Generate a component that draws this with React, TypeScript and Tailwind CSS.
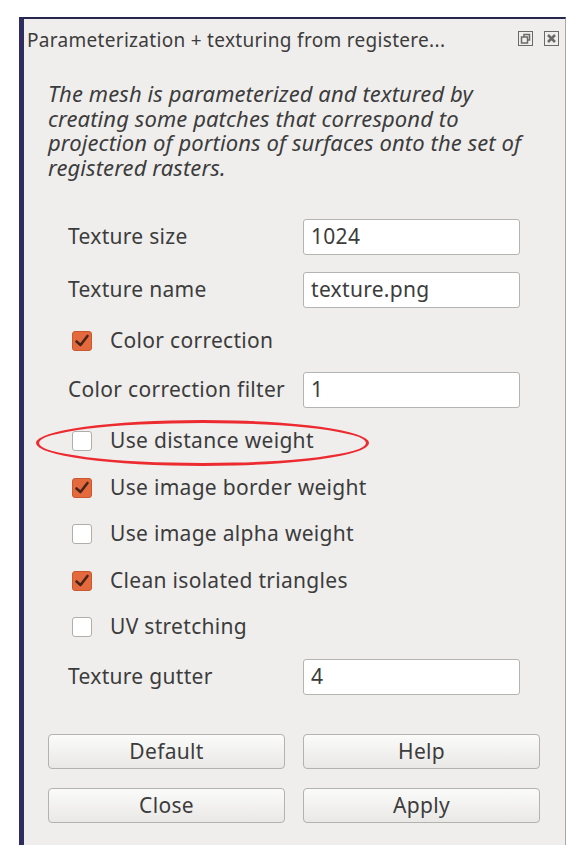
import React from "react";

const font = { fontFamily: '"Noto Sans", "Open Sans", sans-serif' };

function Check({ checked }: { checked: boolean }) {
  if (checked) {
    return (
      <div className="w-[20px] h-[20px] rounded-[3px] bg-[#e4693d] border border-[#c9582f] flex items-center justify-center shrink-0">
        <svg width="16" height="14" viewBox="0 0 16 14">
          <path d="M2.5 7.5 L6.5 11 L13.5 2" stroke="#4a2418" strokeWidth="2.6" fill="none" strokeLinecap="round" strokeLinejoin="round" />
        </svg>
      </div>
    );
  }
  return <div className="w-[20px] h-[20px] rounded-[3px] bg-white border border-[#b0aeab] shrink-0" />;
}

function FieldRow({ label, value, mt }: { label: string; value: string; mt: string }) {
  return (
    <div className={`flex items-center h-[36px] ${mt}`}>
      <div className="w-[279px] pl-[44px] text-[21px] tracking-[0.3px] text-[#3c3c3c] whitespace-nowrap">{label}</div>
      <div className="w-[217px] h-[36px] bg-white border border-[#b6b4b0] rounded-[3px] flex items-center pl-[7px] text-[21px] tracking-[0.3px] text-[#3c3c3c]">
        {value}
      </div>
    </div>
  );
}

function CheckRow({ label, checked, mt, circled }: { label: string; checked: boolean; mt: string; circled?: boolean }) {
  return (
    <div className={`relative flex items-center h-[36px] pl-[48px] ${mt}`}>
      <Check checked={checked} />
      <div className="ml-[18px] text-[21px] tracking-[0.3px] text-[#3c3c3c] whitespace-nowrap">{label}</div>
      {circled && (
        <div className="absolute left-[12px] top-[-3px] w-[333px] h-[46px] rounded-[50%] border-[3px] border-[#ec2a2f]" />
      )}
    </div>
  );
}

function Btn({ label }: { label: string }) {
  return (
    <div className="w-[237px] h-[35px] rounded-[4px] border border-[#b4b2ae] bg-gradient-to-b from-[#fbfbfa] to-[#e9e8e6] flex items-center justify-center text-[21px] tracking-[0.3px] text-[#3c3c3c]">
      {label}
    </div>
  );
}

export default function App() {
  return (
    <div className="w-[582px] h-[861px] bg-white pt-[17px] pl-[19px]" style={font}>
      <div className="w-[547px] h-[828px] bg-[#efeeec] border-t-2 border-l-[5px] border-t-[#26264f] border-l-[#2d2d62] border-r border-r-[#a9a8a6] flex flex-col">
        <div className="flex items-center h-[42px] pl-[3px] pr-[6px]">
          <div className="text-[19px] tracking-[0.3px] text-[#3c3c3c] whitespace-nowrap flex-1">Parameterization + texturing from registere...</div>
          <svg width="15" height="15" viewBox="0 0 15 15" className="mr-[11px] -mt-[3px]">
            <rect x="0.5" y="0.5" width="14" height="14" fill="none" stroke="#6a6a6a" />
            <rect x="3.5" y="6" width="6" height="6" fill="none" stroke="#6a6a6a" strokeWidth="1.5" />
            <path d="M6 6 V3.5 H11.5 V9 H9.5" fill="none" stroke="#6a6a6a" strokeWidth="1.5" />
          </svg>
          <svg width="15" height="15" viewBox="0 0 15 15" className="-mt-[3px]">
            <rect x="0.5" y="0.5" width="14" height="14" fill="none" stroke="#6a6a6a" />
            <path d="M4 4 L11 11 M11 4 L4 11" stroke="#6a6a6a" strokeWidth="2.6" />
          </svg>
        </div>
        <div className="mt-[20px] pl-[24px] pr-[16px] text-[22px] tracking-[0.1px] leading-[24.5px] italic text-[#3c3c3c]">
          The mesh is parameterized and textured by creating some patches that correspond to projection of portions of surfaces onto the set of registered rasters.
        </div>
        <div className="flex flex-col mt-[40px]">
          <FieldRow label="Texture size" value="1024" mt="" />
          <FieldRow label="Texture name" value="texture.png" mt="mt-[17px]" />
          <CheckRow label="Color correction" checked mt="mt-[15px]" />
          <FieldRow label="Color correction filter" value="1" mt="mt-[13px]" />
          <CheckRow label="Use distance weight" checked={false} mt="mt-[15px]" circled />
          <CheckRow label="Use image border weight" checked mt="mt-[11px]" />
          <CheckRow label="Use image alpha weight" checked={false} mt="mt-[10px]" />
          <CheckRow label="Clean isolated triangles" checked mt="mt-[11px]" />
          <CheckRow label="UV stretching" checked={false} mt="mt-[10px]" />
          <FieldRow label="Texture gutter" value="4" mt="mt-[14px]" />
        </div>
        <div className="mt-[39px] pl-[24px] flex flex-col gap-[19px]">
          <div className="flex gap-[18px]">
            <Btn label="Default" />
            <Btn label="Help" />
          </div>
          <div className="flex gap-[18px]">
            <Btn label="Close" />
            <Btn label="Apply" />
          </div>
        </div>
      </div>
    </div>
  );
}
